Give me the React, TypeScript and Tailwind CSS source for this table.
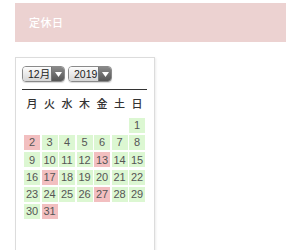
const days: (number | null)[] = [
  null, null, null, null, null, null, 1,
  2, 3, 4, 5, 6, 7, 8,
  9, 10, 11, 12, 13, 14, 15,
  16, 17, 18, 19, 20, 21, 22,
  23, 24, 25, 26, 27, 28, 29,
  30, 31,
];

const holidays = [2, 13, 17, 27, 31];
const weekdays = ["月", "火", "水", "木", "金", "土", "日"];

function FakeSelect({ label, width }: { label: string; width: string }) {
  return (
    <div className={`flex h-[16px] ${width} overflow-hidden rounded-[4px] border border-[#8a8a8a] shadow-[0_1px_1px_rgba(0,0,0,0.15)]`}>
      <div className="flex flex-1 items-center bg-gradient-to-b from-[#fdfdfd] to-[#d6d6d6] pl-[5px] text-[10.5px] leading-none text-[#222]">
        {label}
      </div>
      <div className="flex w-[13px] items-center justify-center border-l border-[#777] bg-gradient-to-b from-[#8a8a8a] to-[#555]">
        <svg width="7" height="5" viewBox="0 0 7 5">
          <path d="M0 0H7L3.5 5Z" fill="#fff" />
        </svg>
      </div>
    </div>
  );
}

export default function App() {
  return (
    <div className="h-[250px] w-[300px] overflow-hidden bg-white font-['Liberation_Sans','Noto_Sans_CJK_JP',sans-serif]">
      <div className="ml-[15px] mt-[3px] flex h-[39px] w-[271px] items-center bg-[#ecd2d1] px-[14px]">
        <span className="font-['Noto_Sans_CJK_JP',sans-serif] text-[11px] font-medium tracking-[0.5px] text-white">
          定休日
        </span>
      </div>

      <div className="ml-[15px] mt-[15px] h-[210px] w-[140px] border border-[#dcdcdc] pl-[6px] pt-[8px] shadow-[1px_1px_2px_rgba(0,0,0,0.08)]">
        <div className="flex gap-[3px]">
          <FakeSelect label="12月" width="w-[43px]" />
          <FakeSelect label="2019" width="w-[44px]" />
        </div>

        <div className="mt-[7px] w-[125px] border-t border-[#333]" />

        <div className="ml-[2px] mt-[6px] grid grid-cols-[repeat(7,16px)] gap-x-[1.5px]">
          {weekdays.map((w) => (
            <div
              key={w}
              className="flex h-[14px] items-center justify-center font-['Noto_Sans_CJK_JP',sans-serif] text-[11px] font-medium text-[#333]"
            >
              {w}
            </div>
          ))}
        </div>

        <div className="ml-[2px] mt-[8px] grid grid-cols-[repeat(7,16px)] gap-x-[1.5px] gap-y-[2.2px]">
          {days.map((d, i) =>
            d === null ? (
              <div key={i} className="h-[15px]" />
            ) : (
              <div
                key={i}
                className={`flex h-[15px] items-center justify-center text-[11px] text-[#555] ${
                  holidays.includes(d) ? "bg-[#f2bfc0]" : "bg-[#dcf7d2]"
                }`}
              >
                {d}
              </div>
            )
          )}
        </div>
      </div>
    </div>
  );
}
